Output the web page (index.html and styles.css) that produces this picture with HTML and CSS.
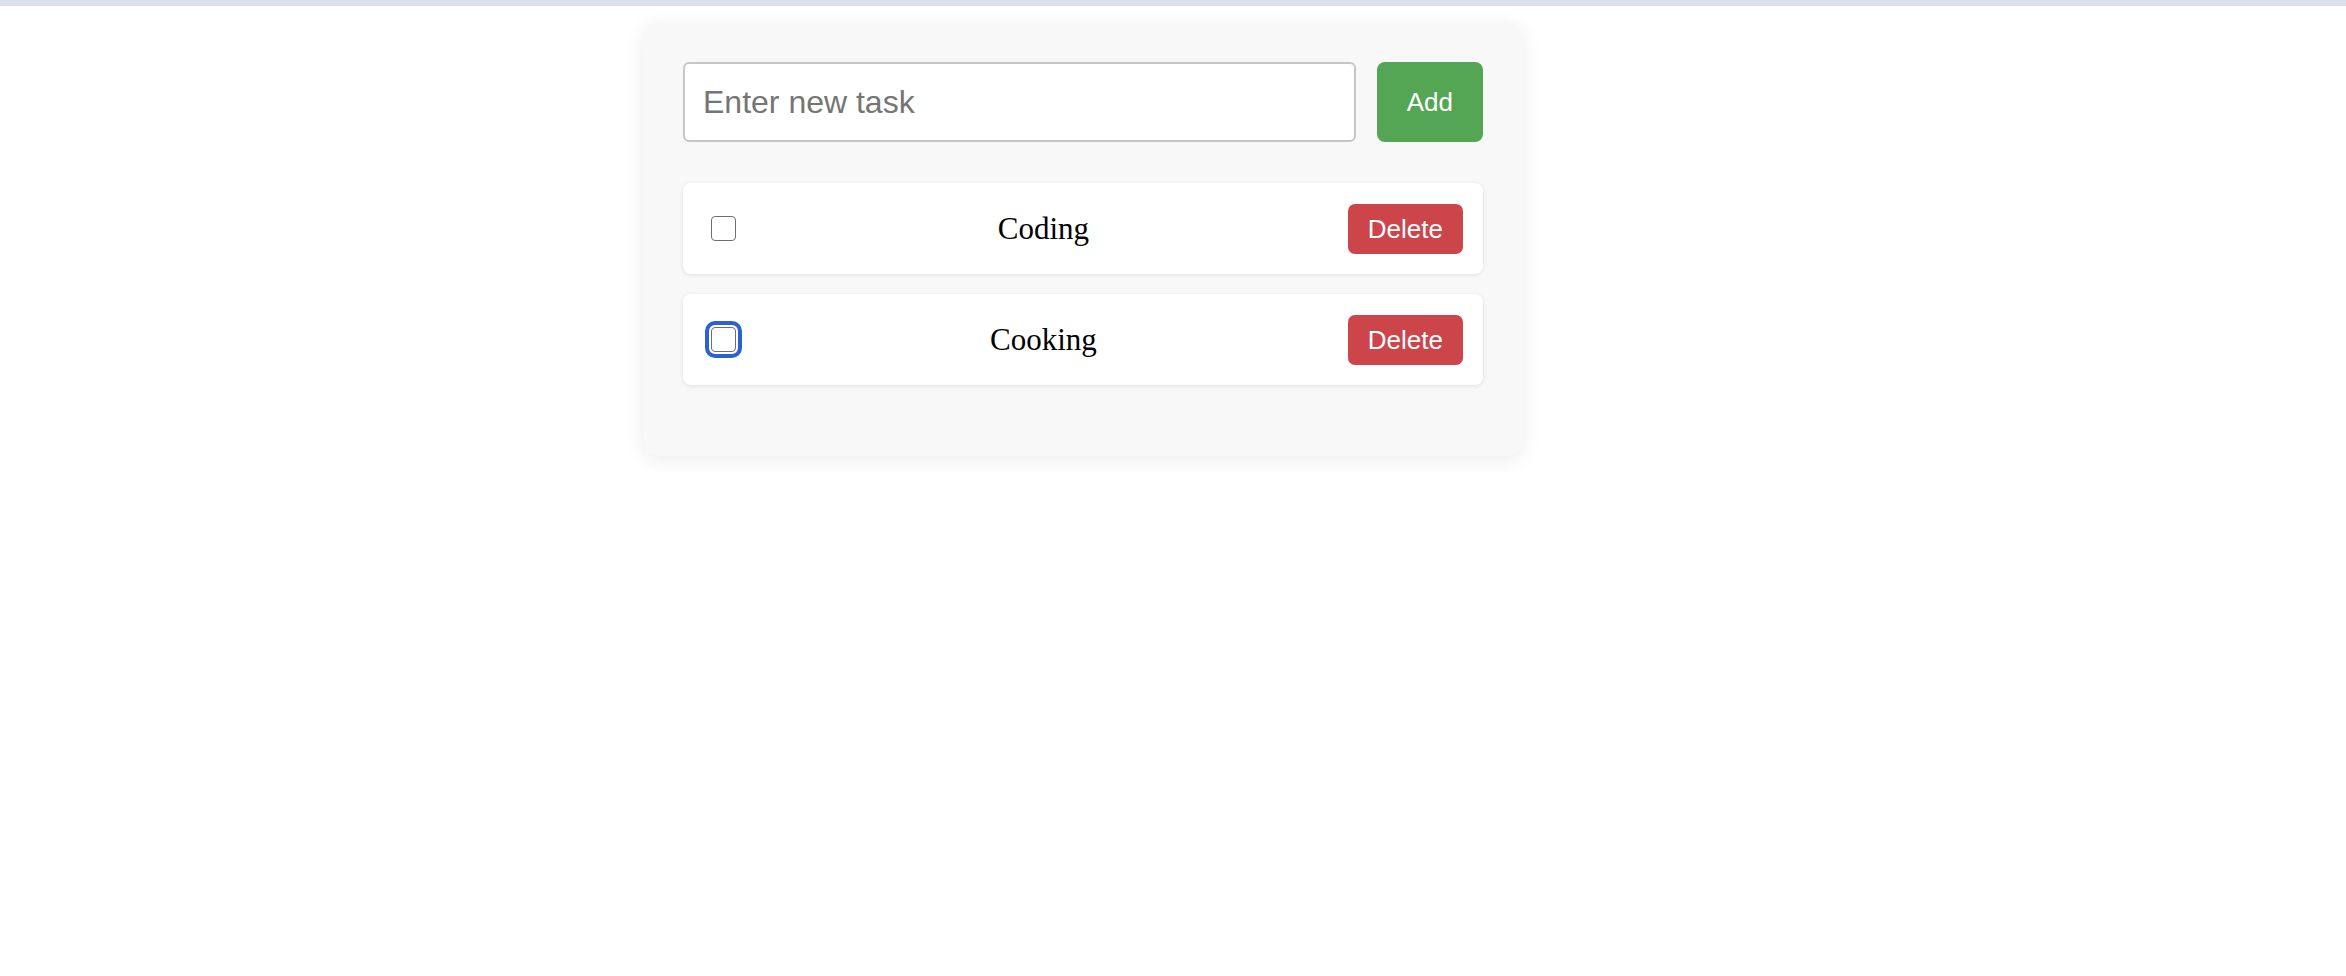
FILE: index.html
```html
<!DOCTYPE html>
<html lang="en">
<head>
<meta charset="utf-8">
<title>Todo</title>
<link rel="stylesheet" href="styles.css">
</head>
<body>
<div class="topbar"></div>
<main class="card">
  <div class="input-row">
    <input class="task-input" type="text" placeholder="Enter new task">
    <button class="btn btn-add">Add</button>
  </div>
  <ul class="task-list">
    <li class="task">
      <input class="check" type="checkbox">
      <span class="task-text">Coding</span>
      <button class="btn btn-delete">Delete</button>
    </li>
    <li class="task">
      <input class="check focused" type="checkbox">
      <span class="task-text">Cooking</span>
      <button class="btn btn-delete">Delete</button>
    </li>
  </ul>
</main>
</body>
</html>
```
FILE: styles.css
```css
html, body {
  margin: 0;
  padding: 0;
  background: #ffffff;
}

body {
  min-height: 100vh;
  font-family: "Liberation Serif", "Times New Roman", serif;
}

.topbar {
  height: 6px;
  background: #dbe1ea;
}

.card {
  width: 800px;
  margin: 16px 0 40px 643px;
  padding: 40px 40px 41px;
  background: #f8f8f8;
  border-radius: 15px;
  box-shadow: 0 4px 20px rgba(0, 0, 0, 0.08);
}

.input-row {
  display: flex;
  gap: 21px;
  height: 80px;
  margin-bottom: 41px;
}

.task-input {
  flex: 1;
  min-width: 0;
  box-sizing: border-box;
  height: 80px;
  padding: 0 18px;
  border: 2px solid #c6c6c6;
  border-radius: 6px;
  background: #ffffff;
  font-family: "Liberation Sans", Arial, sans-serif;
  font-size: 32px;
  color: #222;
  outline: none;
}

.task-input::placeholder {
  color: #757575;
}

.btn {
  border: none;
  color: #ffffff;
  font-family: "Liberation Sans", Arial, sans-serif;
  font-size: 26px;
  line-height: 30px;
  cursor: pointer;
}

.btn-add {
  padding: 0 30px;
  background: #55a654;
  border-radius: 8px;
}

.btn-delete {
  padding: 10px 20px;
  background: #cc454b;
  border-radius: 7px;
}

.task-list {
  list-style: none;
  margin: 0;
  padding: 0;
}

.task {
  display: flex;
  align-items: center;
  height: 91px;
  box-sizing: border-box;
  padding: 0 20px;
  margin-bottom: 20px;
  background: #ffffff;
  border-radius: 8px;
  box-shadow: 0 1px 4px rgba(0, 0, 0, 0.1);
}

.task:last-child {
  margin-bottom: 30px;
}

.check {
  appearance: none;
  -webkit-appearance: none;
  box-sizing: border-box;
  width: 25px;
  height: 25px;
  margin: 0 3px 0 8px;
  border: 1.5px solid #6e6e6e;
  border-radius: 4px;
  background: #ffffff;
  flex: none;
}

.check.focused {
  outline: 4px solid #2b62cf;
  outline-offset: 2px;
}

.task-text {
  flex: 1;
  text-align: center;
  font-family: "Liberation Serif", "Times New Roman", serif;
  font-size: 31px;
  color: #000;
}
```
